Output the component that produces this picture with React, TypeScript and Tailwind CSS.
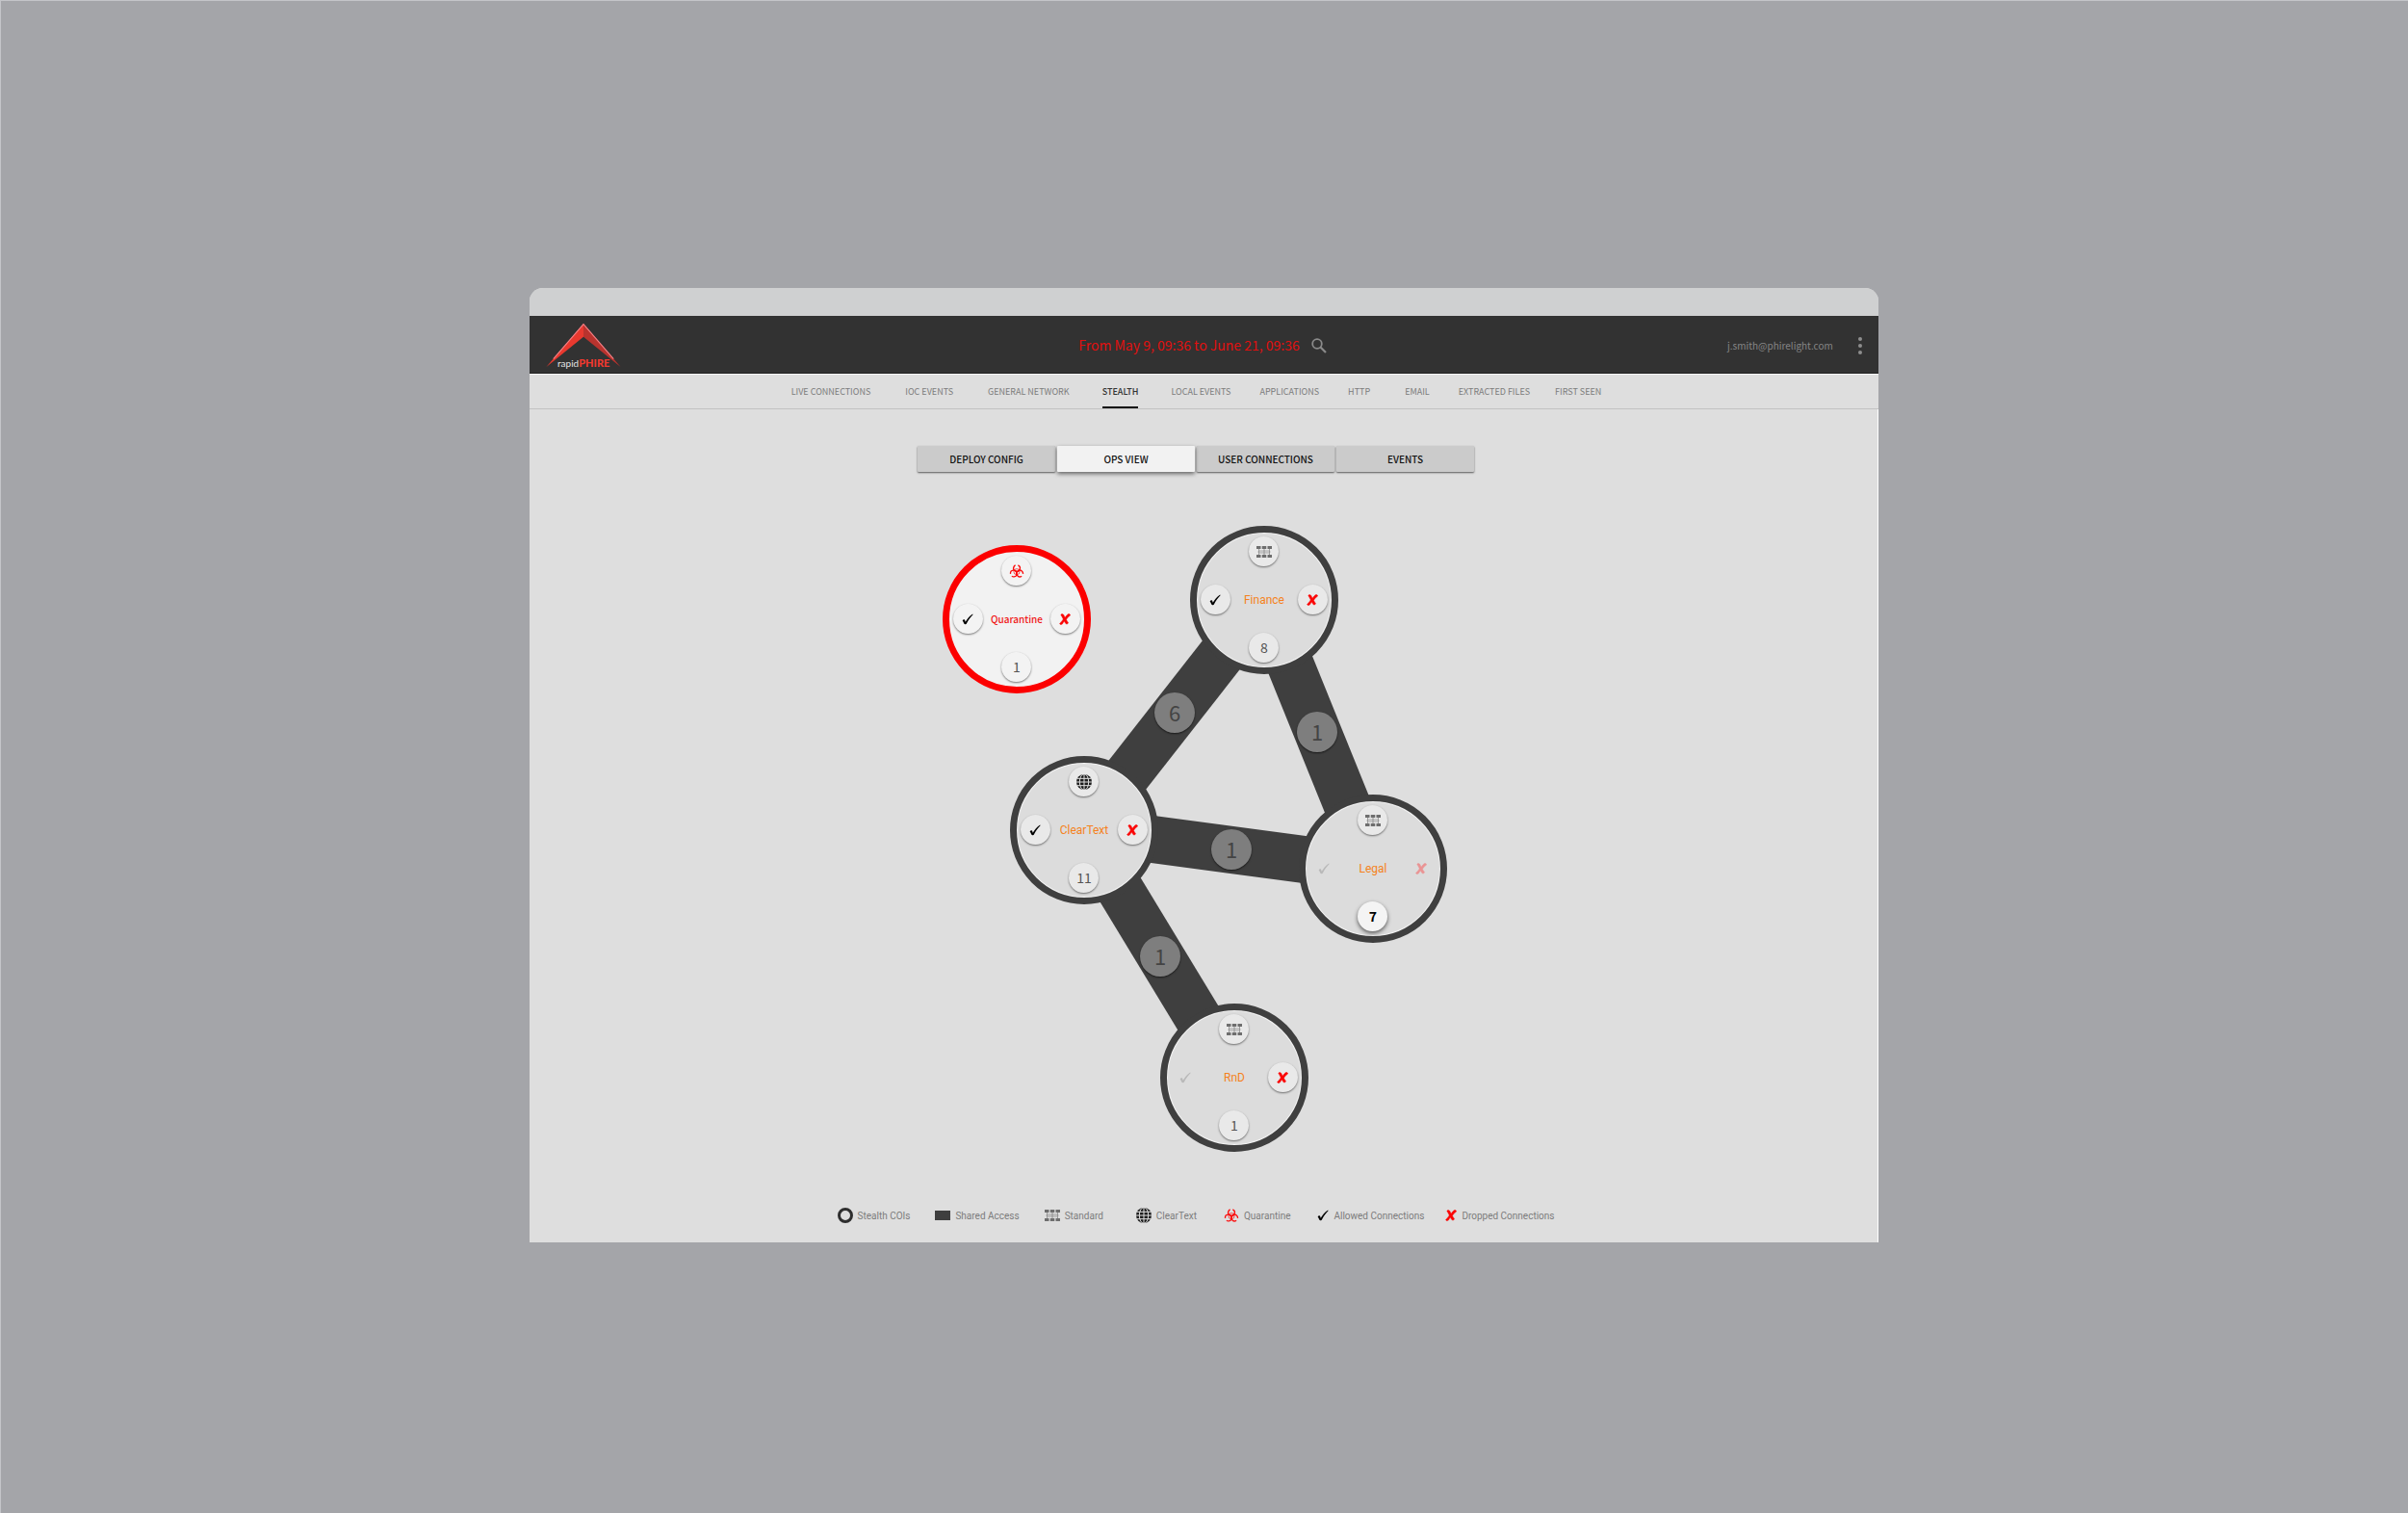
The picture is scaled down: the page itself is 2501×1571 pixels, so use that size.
import React from 'react';

type IconProps = { className?: string };

const Check = ({ className }: IconProps) => (
  <svg viewBox="0 0 24 24" className={className} fill="currentColor" aria-hidden="true">
    <path d="M1.5 14.6c.5-1.3 2-2.2 3.6-1.9 1 .2 1.300 1.300 1.900 3.700.2.700.700.8 1.100.2C11.400 10.600 15.800 5.400 21 1.800c.6-.4 1.900-.6 2.300-.2.3.4-.2.8-.8 1.500C17.600 8 13.700 13.300 10 20.400c-.7 1.400-1.500 1.900-3.100 1.900-1.500 0-2-.4-2.500-1.700-1.100-3.100-1.600-4.100-2.500-4.800-.4-.3-.6-.7-.4-1.200z" />
  </svg>
);

const Cross = ({ className }: IconProps) => (
  <svg viewBox="0 0 24 24" className={className} fill="currentColor" aria-hidden="true">
    <path
      d="M4.200 1.900C5.900.7 8.300 1 9.300 2.600c1 1.600 2 3.600 2.900 5.700C14 5.800 16 3.300 18.200 1.500c1-.8 2.600-.8 3.800-.1 1.200.8 1.700 1.900 1.100 2.700-.5.700-1.600 1-2.600 2-1.800 1.800-3.800 4-5.500 6.500 1.200 2.500 2.300 4.300 3.600 5.700.6.700.6 1.400 0 2.200-1 1.500-3.500 2-4.800.6-1.100-1.300-2.200-3.100-3.200-5-1.500 2.200-2.600 4-3.500 5.500-.8 1.400-2 1.800-3.600 1.500-1.600-.4-2.600-1.500-2.100-2.700.4-.9 1.400-1.200 2.200-2.100 1.600-1.800 3.300-4 4.900-6.500C7.300 9.200 6 6.700 4.600 4.700c-.8-1.100-1.300-2.100-.4-2.800z"
      stroke="currentColor"
      strokeWidth="0.8"
    />
  </svg>
);

const Network = ({ className }: IconProps) => (
  <svg viewBox="0 0 32 24" className={className} fill="currentColor" aria-hidden="true">
    <path d="M0 0h9v6H0zM11.500 0h9v6h-9zM23 0h9v6h-9zM0 18h9v6H0zM11.500 18h9v6h-9zM23 18h9v6h-9z" />
    <path d="M5 6v12M16 6v12M27 6v12M3 12h26" stroke="currentColor" strokeWidth="1.500" opacity="0.8" />
    <path d="M6 9h20M6 15h20" stroke="currentColor" strokeWidth="1.500" opacity="0.35" />
  </svg>
);

const Globe = ({ className }: IconProps) => (
  <svg viewBox="0 0 24 24" className={className} aria-hidden="true">
    <circle cx="12" cy="12" r="12" fill="currentColor" />
    <g fill="none" stroke="#dedede" strokeWidth="1.500">
      <path d="M12 0v24M0 12h24M1 6.500h22M1 17.500h22" />
      <ellipse cx="12" cy="12" rx="7" ry="12.500" />
    </g>
  </svg>
);

const Biohazard = ({ className }: IconProps) => (
  <svg viewBox="0 0 24 24" className={className} fill="none" stroke="currentColor" aria-hidden="true">
    <g strokeWidth="2">
      {[30, 150, 270].map((angle) => (
        <g key={angle} transform={`rotate(${angle} 12 13)`}>
          <circle
            cx="17.500"
            cy="13"
            r="5"
            pathLength="360"
            strokeDasharray="312 48"
            transform="rotate(24 17.500 13)"
          />
        </g>
      ))}
    </g>
    <circle cx="12" cy="13" r="4.600" strokeWidth="1" />
  </svg>
);

const Search = ({ className }: IconProps) => (
  <svg viewBox="0 0 16 16" className={className} fill="none" stroke="currentColor" aria-hidden="true">
    <circle cx="6" cy="6" r="4.800" strokeWidth="1.800" />
    <path d="M9.500 9.500l5.500 5.500" strokeWidth="2.200" />
  </svg>
);

const Logo = () => (
  <a href="#home" aria-label="rapidPHIRE" className="relative block h-12 w-20">
    <svg viewBox="-1 -1 82 49" className="h-12 w-20" aria-hidden="true">
      <path d="M40 0L0.500 46L40 14z" fill="#e8392f" />
      <path d="M40 0L79.500 46L40 14z" fill="#b9332e" />
      <path d="M8 37.500L40 0.500L72 37.500" fill="none" stroke="#f07f84" strokeWidth="1.200" />
    </svg>
    <span className="absolute inset-x-0 bottom-0 flex items-baseline justify-center font-['Lato',sans-serif] text-[10px] leading-3 text-[#e4e4e4]">
      <span>rapid</span>
      <span className="text-[11px] font-black text-[#f0392f]">PHIRE</span>
    </span>
  </a>
);

const NAV = [
  { label: 'LIVE CONNECTIONS', gap: 'mr-9' },
  { label: 'IOC EVENTS', gap: 'mr-9' },
  { label: 'GENERAL NETWORK', gap: 'mr-[34px]' },
  { label: 'STEALTH', gap: 'mr-[34px]' },
  { label: 'LOCAL EVENTS', gap: 'mr-[30px]' },
  { label: 'APPLICATIONS', gap: 'mr-[30px]' },
  { label: 'HTTP', gap: 'mr-9' },
  { label: 'EMAIL', gap: 'mr-[30px]' },
  { label: 'EXTRACTED FILES', gap: 'mr-[26px]' },
  { label: 'FIRST SEEN', gap: '' },
];

const TABS = ['DEPLOY CONFIG', 'OPS VIEW', 'USER CONNECTIONS', 'EVENTS'];

type Kind = 'quarantine' | 'standard' | 'cleartext';
type Coi = {
  name: string;
  x: number;
  y: number;
  kind: Kind;
  count: number;
  allowed: boolean;
  dropped: boolean;
  selected?: boolean;
};

const NODES: Coi[] = [
  { name: 'Quarantine', x: 84, y: 103, kind: 'quarantine', count: 1, allowed: true, dropped: true },
  { name: 'Finance', x: 341, y: 83, kind: 'standard', count: 8, allowed: true, dropped: true },
  { name: 'ClearText', x: 154, y: 322, kind: 'cleartext', count: 11, allowed: true, dropped: true },
  { name: 'Legal', x: 454, y: 362, kind: 'standard', count: 7, allowed: false, dropped: false, selected: true },
  { name: 'RnD', x: 310, y: 579, kind: 'standard', count: 1, allowed: false, dropped: true },
];

const LINKS = [
  { from: 1, to: 2, x: 248, y: 200, count: 6 },
  { from: 1, to: 3, x: 396, y: 220, count: 1 },
  { from: 2, to: 3, x: 307, y: 342, count: 1 },
  { from: 2, to: 4, x: 233, y: 453, count: 1 },
];

const KindIcon = ({ kind }: { kind: Kind }) => {
  if (kind === 'quarantine') return <Biohazard className="size-4 text-[#fb0a0a]" />;
  if (kind === 'cleartext') return <Globe className="size-4 text-[#1e1e1e]" />;
  return <Network className="h-3 w-4 text-[#6e6e6e]" />;
};

const CHIP = 'flex size-[31px] items-center justify-center rounded-full';
const RAISED = 'shadow-[0_1px_2px_rgba(0,0,0,0.5)]';

const CoiNode = ({ node }: { node: Coi }) => {
  const q = node.kind === 'quarantine';
  const face = q ? 'bg-[#f3f3f3]' : 'bg-[#e9e9e9]';
  return (
    <div
      className={`absolute flex size-[154px] -translate-1/2 flex-col items-center justify-between rounded-full border-[7px] px-1 pt-1 pb-[5px] ${
        q ? 'border-[#fc0000] bg-[#f2f2f2]' : 'border-[#3f3f3f] bg-[#dcdcdc] shadow-[inset_0_0_0_1px_#f1f1f1]'
      }`}
      style={{ left: node.x, top: node.y }}
    >
      <button aria-label={`${node.name} type`} className={`${CHIP} ${RAISED} ${face}`}>
        <KindIcon kind={node.kind} />
      </button>
      <div className="flex w-full items-center justify-between">
        <button
          aria-label={`${node.name} allowed connections`}
          className={node.allowed ? `${CHIP} ${RAISED} ${face} text-black` : `${CHIP} text-[#b9b9b9]`}
        >
          <Check className="size-3" />
        </button>
        <span
          className={
            q
              ? 'text-[10px] font-medium text-[#f01818]'
              : "font-['Roboto',sans-serif] text-[12px] text-[#f58220]"
          }
        >
          {node.name}
        </span>
        <button
          aria-label={`${node.name} dropped connections`}
          className={node.dropped ? `${CHIP} ${RAISED} ${face} text-[#fb0505]` : `${CHIP} text-[#ea9494]`}
        >
          <Cross className="size-3" />
        </button>
      </div>
      <button
        className={`${CHIP} text-[14px] ${
          node.selected
            ? 'bg-[#f4f4f4] font-bold text-black shadow-[0_2px_4px_rgba(0,0,0,0.6)]'
            : `${RAISED} ${face} text-[#555]`
        }`}
      >
        {node.count}
      </button>
    </div>
  );
};

const LEGEND = [
  { label: 'Stealth COIs', gap: 'mr-[26px]', icon: <span className="size-4 rounded-full border-[3px] border-[#2e2e2e]" /> },
  { label: 'Shared Access', gap: 'mr-[26px]', icon: <span className="h-[10px] w-4 bg-[#3f3f3f]" /> },
  { label: 'Standard', gap: 'mr-[34px]', icon: <Network className="h-3 w-4 text-[#6e6e6e]" /> },
  { label: 'ClearText', gap: 'mr-7', icon: <Globe className="size-4 text-[#1e1e1e]" /> },
  { label: 'Quarantine', gap: 'mr-7', icon: <Biohazard className="size-4 text-[#fb0a0a]" /> },
  { label: 'Allowed Connections', gap: 'mr-[22px]', icon: <Check className="size-3 text-black" /> },
  { label: 'Dropped Connections', gap: '', icon: <Cross className="size-3 text-[#fb0505]" /> },
];

export default function App() {
  return (
    <div className="min-h-screen bg-[#a4a5a9] pt-[299px] pb-10 font-['Noto_Sans_CJK_SC','Noto_Sans',sans-serif] shadow-[inset_1px_1px_0_#c4c5c9]">
      <div className="mx-auto w-[56%] min-w-[900px] overflow-hidden rounded-t-[14px] bg-[#dedede]">
        <div className="h-[29px] bg-[#cfd0d1]" />

        <header className="grid h-[60px] grid-cols-3 items-center bg-[#323232] pt-px pr-[11px] pl-4 shadow-[inset_0_-1px_0_#222]">
          <Logo />
          <div className="flex items-center justify-center gap-3 pr-2">
            <button className="text-[14px] whitespace-nowrap text-[#e0100f]">From May 9, 09:36 to June 21, 09:36</button>
            <button aria-label="Search" className="text-[#8a8a8a]">
              <Search className="size-4" />
            </button>
          </div>
          <div className="flex items-center justify-end gap-5">
            <a href="#account" className="text-[10px] text-[#868686]">
              j.smith@phirelight.com
            </a>
            <button aria-label="More options" className="flex w-4 flex-col items-center gap-[3px]">
              <span className="size-1 rounded-full bg-[#8e8e8e]" />
              <span className="size-1 rounded-full bg-[#8e8e8e]" />
              <span className="size-1 rounded-full bg-[#8e8e8e]" />
            </button>
          </div>
        </header>

        <nav className="flex h-[37px] justify-center border-t border-b border-t-[#f6f6f6] border-b-[#c2c2c2] pr-4 text-[9px]">
          {NAV.map(({ label, gap }) => (
            <a
              key={label}
              href="#view"
              aria-current={label === 'STEALTH' ? 'page' : undefined}
              className={`flex items-center border-b-2 pt-[3px] whitespace-nowrap ${gap} ${
                label === 'STEALTH' ? 'border-[#111] font-medium text-[#333]' : 'border-transparent text-[#7c7c7c]'
              }`}
            >
              {label}
            </a>
          ))}
        </nav>

        <main className="flex flex-col items-center border-r border-white pt-[38px] pr-4 pb-5">
          <div role="tablist" className="flex gap-[2px]">
            {TABS.map((tab) => (
              <button
                key={tab}
                role="tab"
                aria-selected={tab === 'OPS VIEW'}
                className={`flex h-[27px] w-[143px] items-center justify-center rounded-[1px] text-[10px] font-medium text-[#111] ${
                  tab === 'OPS VIEW'
                    ? 'z-10 bg-[#f2f2f2] shadow-[0_2px_4px_rgba(0,0,0,0.55)]'
                    : 'bg-[#cbcbcb] shadow-[0_1px_2px_rgba(0,0,0,0.6)]'
                }`}
              >
                {tab}
              </button>
            ))}
          </div>

          <div className="relative mt-[50px] h-[670px] w-[540px]">
            <svg className="absolute inset-0 size-full" viewBox="0 0 540 670" aria-hidden="true">
              {LINKS.map((l) => (
                <line
                  key={`${l.from}-${l.to}`}
                  x1={NODES[l.from].x}
                  y1={NODES[l.from].y}
                  x2={NODES[l.to].x}
                  y2={NODES[l.to].y}
                  stroke="#3f3f3f"
                  strokeWidth="49"
                />
              ))}
            </svg>
            {NODES.map((n) => (
              <CoiNode key={n.name} node={n} />
            ))}
            {LINKS.map((l) => (
              <button
                key={`${l.from}-${l.to}`}
                className="absolute flex size-[42px] -translate-1/2 items-center justify-center rounded-full bg-[#7e7e7e] pb-[2px] text-[22px] text-[#444] shadow-[0_1px_2px_rgba(0,0,0,0.6)]"
                style={{ left: l.x, top: l.y }}
              >
                {l.count}
              </button>
            ))}
          </div>

          <ul className="mt-11 flex h-4 font-['Roboto',sans-serif] text-[10px] text-[#7c7c7c]">
            {LEGEND.map(({ label, gap, icon }) => (
              <li key={label} className={`flex items-center gap-[5px] whitespace-nowrap ${gap}`}>
                {icon}
                {label}
              </li>
            ))}
          </ul>
        </main>
      </div>
    </div>
  );
}
